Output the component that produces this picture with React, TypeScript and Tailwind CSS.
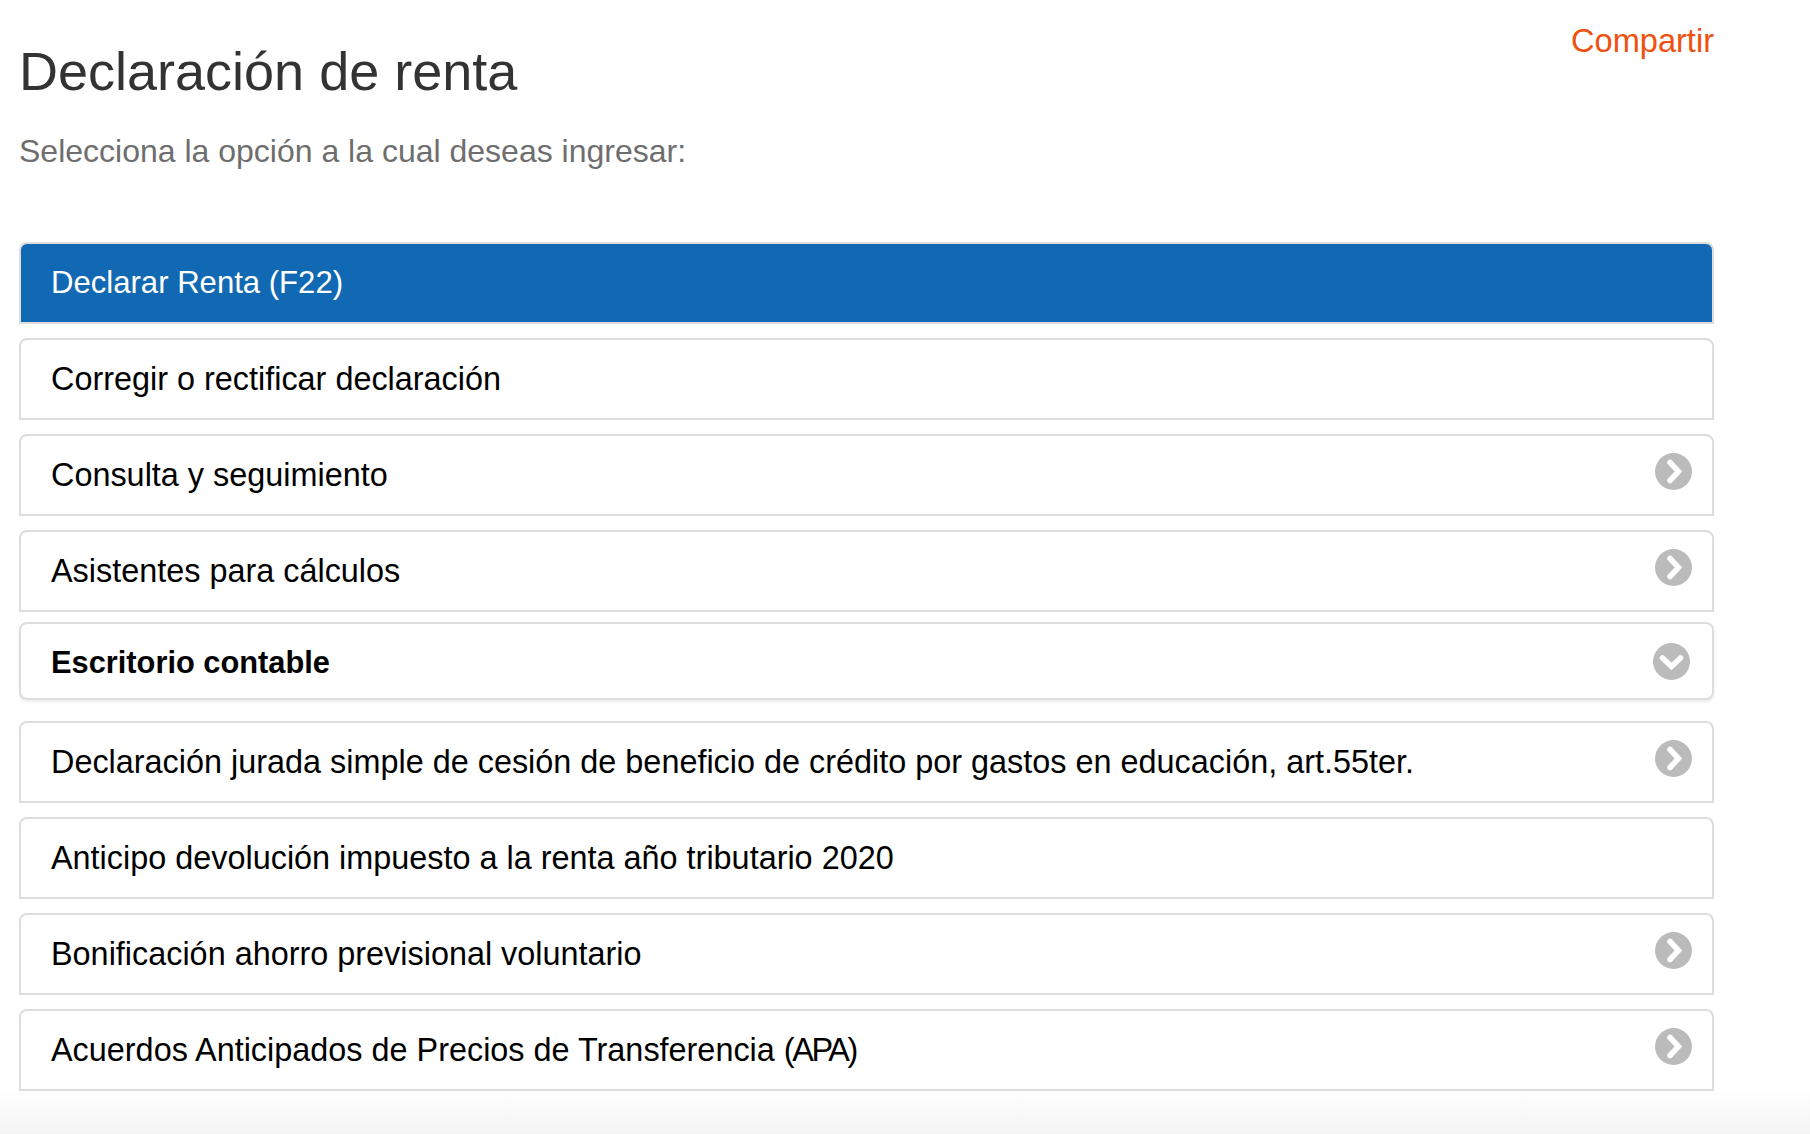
import type { ReactNode } from "react"

const options = [
  { label: "Corregir o rectificar declaración", icon: null },
  { label: "Consulta y seguimiento", icon: "right" },
  { label: "Asistentes para cálculos", icon: "right" },
]

const moreOptions = [
  { label: "Declaración jurada simple de cesión de beneficio de crédito por gastos en educación, art.55ter.", icon: "right" },
  { label: "Anticipo devolución impuesto a la renta año tributario 2020", icon: null },
  { label: "Bonificación ahorro previsional voluntario", icon: "right" },
  {
    label: (
      <>
        Acuerdos Anticipados de Precios de Transferencia <span className="tracking-[-2.4px]">(APA)</span>
      </>
    ),
    icon: "right",
  },
]

function ArrowIcon({ down = false }: { down?: boolean }) {
  return (
    <svg width="37" height="37" viewBox="0 0 37 37" className="shrink-0">
      <circle cx="18.5" cy="18.5" r="18.5" fill="#bbbbbb" />
      <path
        d={down ? "M9.5 15l9 8.5 9-8.5" : "M15 9.5l8.5 9-8.5 9"}
        fill="none"
        stroke="#ffffff"
        strokeWidth="5.5"
        strokeLinecap="round"
        strokeLinejoin="miter"
      />
    </svg>
  )
}

function OptionRow({ label, icon }: { label: ReactNode; icon: string | null }) {
  return (
    <div className="flex h-[82px] items-center justify-between rounded-t-lg border-2 border-[#dddddd] bg-white pl-[30px] pr-[20px]">
      <span className="text-[32.4px] text-black">{label}</span>
      {icon && (
        <span className="mb-[7px] flex">
          <ArrowIcon />
        </span>
      )}
    </div>
  )
}

export default function App() {
  return (
    <div className="h-[1134px] overflow-hidden bg-[linear-gradient(to_bottom,#ffffff_1090px,#f4f4f4_1134px)] font-['Liberation_Sans',Arial,sans-serif]">
      <div className="ml-[19px] w-[1695px]">
        {/* Cabecera */}
        <div className="flex items-start justify-between">
          <h1 className="mt-[39px] text-[54px] leading-[64px] text-[#333333]">Declaración de renta</h1>
          <a className="mt-[22px] text-[32.6px] leading-[38px] text-[#ee5110]">Compartir</a>
        </div>
        <p className="mt-[28px] text-[32px] leading-[40px] text-[#6e6e6e]">Selecciona la opción a la cual deseas ingresar:</p>

        {/* Opciones */}
        <div className="mt-[71px] flex flex-col">
          <div className="mb-[14px] flex h-[82px] items-center rounded-t-lg border-2 border-[#dddddd] bg-[#1269b3] pl-[30px]">
            <span className="mt-[1px] text-[31.1px] text-white">Declarar Renta (F22)</span>
          </div>
          <div className="flex flex-col gap-[14px]">
            {options.map((option, index) => (
              <OptionRow key={index} label={option.label} icon={option.icon} />
            ))}
          </div>
          <div className="mb-[21px] mt-[10px] flex h-[78px] items-center justify-between rounded-lg border-2 border-[#dddddd] bg-white pl-[30px] pr-[22px] shadow-[0_2px_3px_rgba(0,0,0,0.08)]">
            <span className="mt-[4px] text-[30.8px] font-bold text-black">Escritorio contable</span>
            <ArrowIcon down />
          </div>
          <div className="flex flex-col gap-[14px]">
            {moreOptions.map((option, index) => (
              <OptionRow key={index} label={option.label} icon={option.icon} />
            ))}
          </div>
        </div>
      </div>
    </div>
  )
}
